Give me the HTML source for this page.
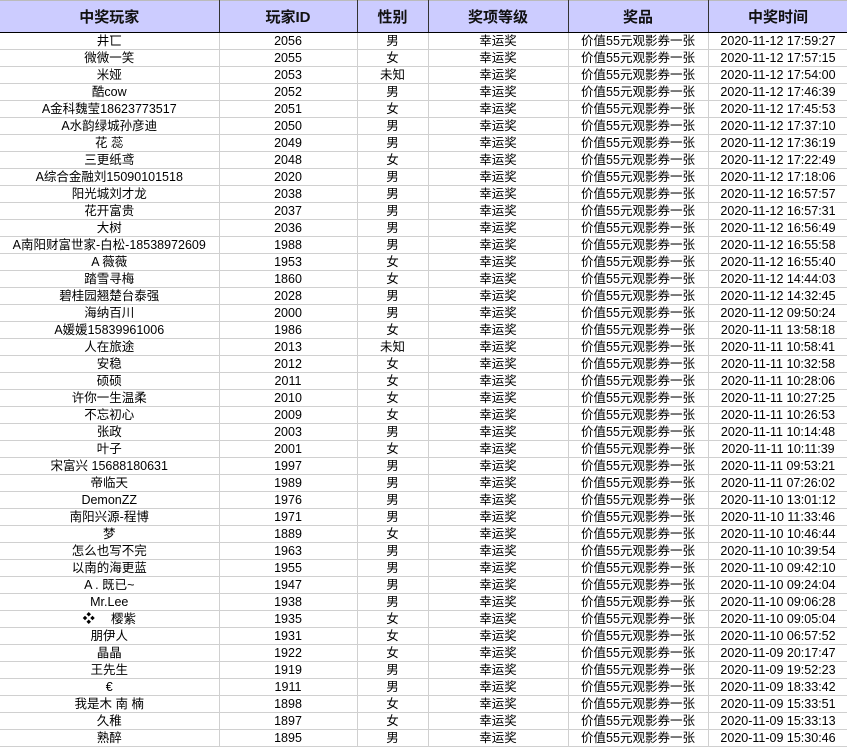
<!DOCTYPE html>
<html><head><meta charset="utf-8"><style>
*{margin:0;padding:0;box-sizing:border-box}
body{width:847px;height:748px;overflow:hidden;background:#fff;font-family:"Liberation Sans","Noto Sans CJK SC",sans-serif;}
table{border-collapse:collapse;table-layout:fixed;width:848px;position:absolute;left:0;top:0}
th{height:32px;background:#ccccff;font-size:15px;font-weight:bold;color:#111;border-right:1px solid #333;border-bottom:1px solid #000;border-top:1px solid #bbb}
td{height:17px;font-size:12.5px;text-align:center;color:#000;border-right:1px solid #d0d0d0;border-bottom:1px solid #d0d0d0;white-space:nowrap;overflow:hidden;line-height:16px}
</style></head><body>
<table>
<colgroup><col style="width:219px"><col style="width:138px"><col style="width:71px"><col style="width:140px"><col style="width:140px"><col style="width:140px"></colgroup>
<tr><th>中奖玩家</th><th>玩家ID</th><th>性别</th><th>奖项等级</th><th>奖品</th><th>中奖时间</th></tr>
<tbody id="b"></tbody>
</table>
<script>
var d=[["井匸",2056,"男","2020-11-12 17:59:27"],["微微一笑",2055,"女","2020-11-12 17:57:15"],["米娅",2053,"未知","2020-11-12 17:54:00"],["酷cow",2052,"男","2020-11-12 17:46:39"],["A金科魏莹18623773517",2051,"女","2020-11-12 17:45:53"],["A水韵绿城孙彦迪",2050,"男","2020-11-12 17:37:10"],["花 蕊",2049,"男","2020-11-12 17:36:19"],["三更纸鸢",2048,"女","2020-11-12 17:22:49"],["A综合金融刘15090101518",2020,"男","2020-11-12 17:18:06"],["阳光城刘才龙",2038,"男","2020-11-12 16:57:57"],["花开富贵",2037,"男","2020-11-12 16:57:31"],["大树",2036,"男","2020-11-12 16:56:49"],["A南阳财富世家-白松-18538972609",1988,"男","2020-11-12 16:55:58"],["A 薇薇",1953,"女","2020-11-12 16:55:40"],["踏雪寻梅",1860,"女","2020-11-12 14:44:03"],["碧桂园翘楚台泰强",2028,"男","2020-11-12 14:32:45"],["海纳百川",2000,"男","2020-11-12 09:50:24"],["A媛媛15839961006",1986,"女","2020-11-11 13:58:18"],["人在旅途",2013,"未知","2020-11-11 10:58:41"],["安稳",2012,"女","2020-11-11 10:32:58"],["硕硕",2011,"女","2020-11-11 10:28:06"],["许你一生温柔",2010,"女","2020-11-11 10:27:25"],["不忘初心",2009,"女","2020-11-11 10:26:53"],["张政",2003,"男","2020-11-11 10:14:48"],["叶子",2001,"女","2020-11-11 10:11:39"],["宋富兴 15688180631",1997,"男","2020-11-11 09:53:21"],["帝临天",1989,"男","2020-11-11 07:26:02"],["DemonZZ",1976,"男","2020-11-10 13:01:12"],["南阳兴源-程博",1971,"男","2020-11-10 11:33:46"],["梦",1889,"女","2020-11-10 10:46:44"],["怎么也写不完",1963,"男","2020-11-10 10:39:54"],["以南的海更蓝",1955,"男","2020-11-10 09:42:10"],["A . 既已~",1947,"男","2020-11-10 09:24:04"],["Mr.Lee",1938,"男","2020-11-10 09:06:28"],["❖　 樱紫",1935,"女","2020-11-10 09:05:04"],["朋伊人",1931,"女","2020-11-10 06:57:52"],["晶晶",1922,"女","2020-11-09 20:17:47"],["王先生",1919,"男","2020-11-09 19:52:23"],["€",1911,"男","2020-11-09 18:33:42"],["我是木 南 楠",1898,"女","2020-11-09 15:33:51"],["久稚",1897,"女","2020-11-09 15:33:13"],["熟醉",1895,"男","2020-11-09 15:30:46"]];
var h="";d.forEach(function(r){h+="<tr><td>"+r[0]+"</td><td>"+r[1]+"</td><td>"+r[2]+"</td><td>幸运奖</td><td>价值55元观影券一张</td><td>"+r[3]+"</td></tr>"});
document.getElementById("b").innerHTML=h;
</script>
</body></html>
